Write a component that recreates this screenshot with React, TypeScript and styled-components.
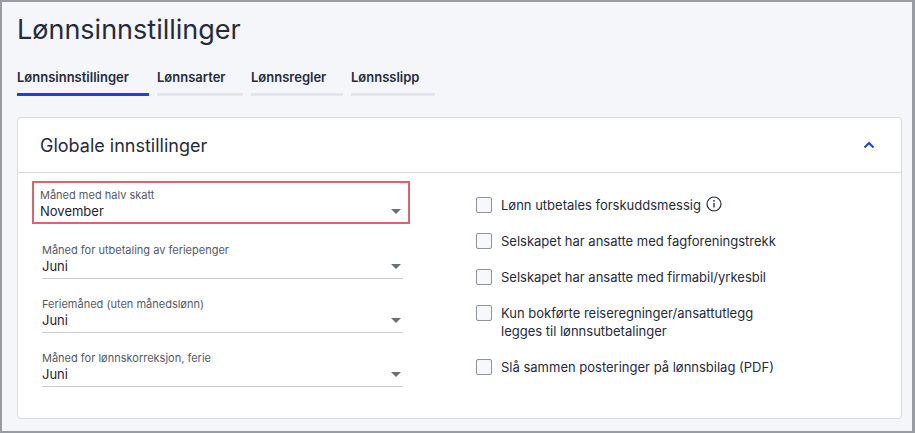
import styled, { createGlobalStyle } from 'styled-components';

const Global = createGlobalStyle`
  html, body { margin: 0; padding: 0; }
  body { font-family: Inter, "Noto Sans", sans-serif; color: #1f2330; }
`;

const Frame = styled.div`
  box-sizing: border-box;
  width: 915px;
  height: 433px;
  border: 2px solid #9a9ca3;
  border-right-width: 3px;
  background: #f5f6fa;
  padding: 12px 10px 0 15px;
  overflow: hidden;
`;

const Heading = styled.h1`
  margin: 0;
  font-size: 27px;
  font-weight: 400;
  color: #262b3a;
  line-height: 32px;
`;

const Tabs = styled.div`
  display: flex;
  gap: 8px;
  margin-top: 23px;
`;

const Tab = styled.div<{ $active?: boolean; $w: number }>`
  font-size: 13px;
  font-weight: 600;
  color: #262b3a;
  padding: 0 0 8px;
  border-bottom: 3px solid ${p => (p.$active ? '#1a44d1' : '#e3e6ef')};
  width: ${p => p.$w}px;
`;

const Card = styled.div`
  margin-top: 21px;
  background: #fff;
  border: 1px solid #d8dae0;
  border-radius: 4px;
  height: 302px;
  box-sizing: border-box;
`;

const CardHeader = styled.div`
  display: flex;
  align-items: center;
  justify-content: space-between;
  height: 54px;
  padding: 0 26px 0 22px;
  border-bottom: 1px solid #d5d7dd;
`;

const CardTitle = styled.h2`
  margin: 0;
  font-size: 18px;
  font-weight: 400;
  color: #262b3a;
`;

const Body = styled.div`
  display: flex;
  padding: 8px 0 0 14px;
`;

const Fields = styled.div`
  width: 378px;
  display: flex;
  flex-direction: column;
  gap: 11px;
`;

const Field = styled.div<{ $focus?: boolean }>`
  box-sizing: border-box;
  height: 43px;
  padding: ${p => (p.$focus ? '5px 5px 0 6px' : '6px 5px 0 8px')};
  border: ${p => (p.$focus ? '2px solid #dc6470' : '2px solid transparent')};
`;

const Label = styled.div`
  font-size: 11px;
  color: #555a66;
  line-height: 14px;
`;

const Select = styled.div<{ $focus?: boolean }>`
  display: flex;
  justify-content: space-between;
  align-items: center;
  font-size: 13px;
  color: #1f2330;
  line-height: 18px;
  padding-bottom: 3px;
  border-bottom: 1px solid ${p => (p.$focus ? 'transparent' : '#c9ccd3')};
`;

const Caret = styled.span`
  width: 0;
  height: 0;
  border-left: 5px solid transparent;
  border-right: 5px solid transparent;
  border-top: 5px solid #6b6f7a;
  margin-right: 2px;
`;

const Checks = styled.div`
  margin-left: 66px;
  padding-top: 15px;
  display: flex;
  flex-direction: column;
  gap: 18px;
`;

const CheckRow = styled.label`
  display: flex;
  align-items: flex-start;
  gap: 9px;
  font-size: 13px;
  line-height: 18px;
  color: #262b3a;
`;

const Box = styled.span`
  flex: none;
  width: 14px;
  height: 14px;
  border: 1px solid #8e929c;
  border-radius: 2px;
  background: #f7f8fb;
  margin-top: 1px;
`;

const fields = [
  { label: 'Måned med halv skatt', value: 'November', focus: true },
  { label: 'Måned for utbetaling av feriepenger', value: 'Juni' },
  { label: 'Feriemåned (uten månedslønn)', value: 'Juni' },
  { label: 'Måned for lønnskorreksjon, ferie', value: 'Juni' },
];

const Info = () => (
  <svg width="16" height="16" viewBox="0 0 16 16" style={{ marginLeft: 5, verticalAlign: -2 }}>
    <circle cx="8" cy="8" r="7" fill="none" stroke="#262b3a" strokeWidth="1.2" />
    <circle cx="8" cy="4.8" r="0.9" fill="#262b3a" />
    <path d="M8 7v4.6" stroke="#262b3a" strokeWidth="1.3" />
  </svg>
);

export default function App() {
  return (
    <>
      <Global />
      <Frame>
        <Heading>Lønnsinnstillinger</Heading>
        <Tabs>
          <Tab $active $w={132}>Lønnsinnstillinger</Tab>
          <Tab $w={86}>Lønnsarter</Tab>
          <Tab $w={92}>Lønnsregler</Tab>
          <Tab $w={84}>Lønnsslipp</Tab>
        </Tabs>
        <Card>
          <CardHeader>
            <CardTitle>Globale innstillinger</CardTitle>
            <svg width="12" height="8" viewBox="0 0 12 8">
              <path d="M1.5 6.5L6 2l4.5 4.5" fill="none" stroke="#1a44d1" strokeWidth="2" />
            </svg>
          </CardHeader>
          <Body>
            <Fields>
              {fields.map(f => (
                <Field key={f.label} $focus={f.focus}>
                  <Label>{f.label}</Label>
                  <Select $focus={f.focus}>
                    {f.value}
                    <Caret />
                  </Select>
                </Field>
              ))}
            </Fields>
            <Checks>
              <CheckRow><Box /><span>Lønn utbetales forskuddsmessig<Info /></span></CheckRow>
              <CheckRow><Box /><span>Selskapet har ansatte med fagforeningstrekk</span></CheckRow>
              <CheckRow><Box /><span>Selskapet har ansatte med firmabil/yrkesbil</span></CheckRow>
              <CheckRow><Box /><span>Kun bokførte reiseregninger/ansattutlegg<br />legges til lønnsutbetalinger</span></CheckRow>
              <CheckRow><Box /><span>Slå sammen posteringer på lønnsbilag (PDF)</span></CheckRow>
            </Checks>
          </Body>
        </Card>
      </Frame>
    </>
  );
}
